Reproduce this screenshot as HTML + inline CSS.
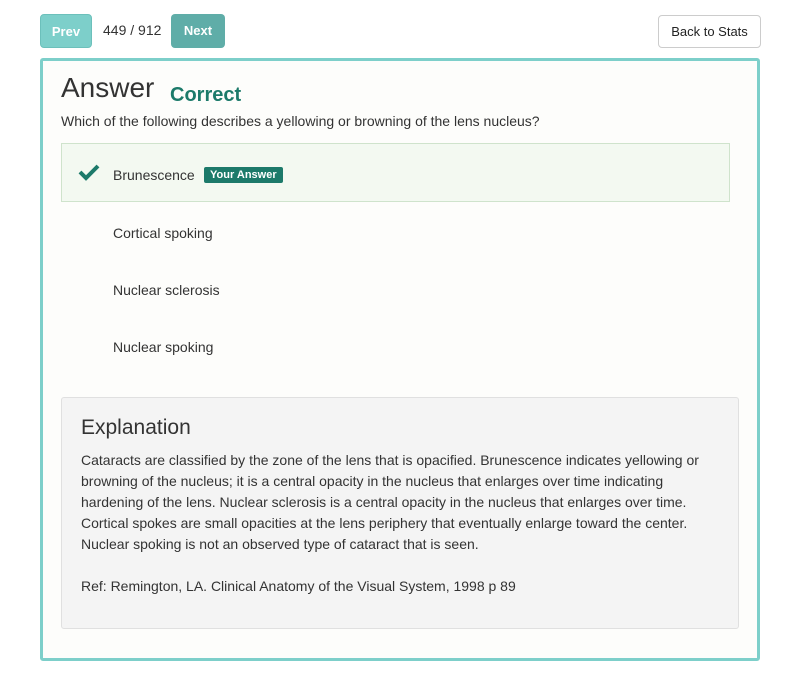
<!DOCTYPE html>
<html><head><style>
*{box-sizing:border-box;margin:0;padding:0}
body{width:800px;height:685px;background:#fff;font-family:"Liberation Sans",sans-serif;color:#333;position:relative;overflow:hidden}
.btn{position:absolute;top:14px;height:34px;border-radius:4px;color:#fff;font-weight:bold;font-size:13px;line-height:34px;text-align:center}
.card{position:absolute;left:40px;top:58px;width:720px;height:603px;border:3px solid #7dcfca;border-radius:3px;background:#fdfdfb}
.opt{position:absolute;left:70px;font-size:14px;color:#333}
</style></head><body>
<div class="btn" style="left:40px;width:52px;background:#7dcfca;border:1px solid #6cc0bb">Prev</div>
<div style="position:absolute;left:103px;top:22px;font-size:14px">449 / 912</div>
<div class="btn" style="left:171px;width:54px;background:#5fada8">Next</div>
<div style="position:absolute;left:658px;top:15px;width:103px;height:33px;border:1px solid #ccc;border-radius:4px;font-size:13px;line-height:31px;text-align:center;color:#222">Back to Stats</div>
<div class="card">
<div style="position:absolute;left:18px;top:11px;font-size:28px;color:#333">Answer</div>
<div style="position:absolute;left:127px;top:23px;font-size:20px;font-weight:bold;color:#1c7a6a">Correct</div>
<div style="position:absolute;left:18px;top:52px;font-size:14px">Which of the following describes a yellowing or browning of the lens nucleus?</div>
<div style="position:absolute;left:18px;top:82px;width:669px;height:59px;background:#f3f9f1;border:1px solid #cfe3cc"></div>
<svg style="position:absolute;left:35px;top:102px" width="22" height="18" viewBox="0 0 22 18"><path d="M2 9l6 6L20 3" stroke="#1c7a6a" stroke-width="4" fill="none"/></svg>
<div class="opt" style="top:106px">Brunescence</div>
<div style="position:absolute;left:161px;top:106px;background:#1c7a6a;color:#fff;font-size:11px;font-weight:bold;padding:2px 6px;border-radius:2px">Your Answer</div>
<div class="opt" style="top:164px">Cortical spoking</div>
<div class="opt" style="top:221px">Nuclear sclerosis</div>
<div class="opt" style="top:278px">Nuclear spoking</div>
<div style="position:absolute;left:18px;top:336px;width:678px;height:232px;background:#f4f4f4;border:1px solid #e0e0e0;border-radius:3px;padding:18px 19px">
<div style="font-size:21px;color:#333;margin-bottom:10px">Explanation</div>
<div style="font-size:14px;line-height:21px">Cataracts are classified by the zone of the lens that is opacified. Brunescence indicates yellowing or browning of the nucleus; it is a central opacity in the nucleus that enlarges over time indicating hardening of the lens. Nuclear sclerosis is a central opacity in the nucleus that enlarges over time. Cortical spokes are small opacities at the lens periphery that eventually enlarge toward the center. Nuclear spoking is not an observed type of cataract that is seen.</div>
<div style="font-size:14px;margin-top:23px">Ref: Remington, LA. Clinical Anatomy of the Visual System, 1998 p 89</div>
</div>
</div>
</body></html>
